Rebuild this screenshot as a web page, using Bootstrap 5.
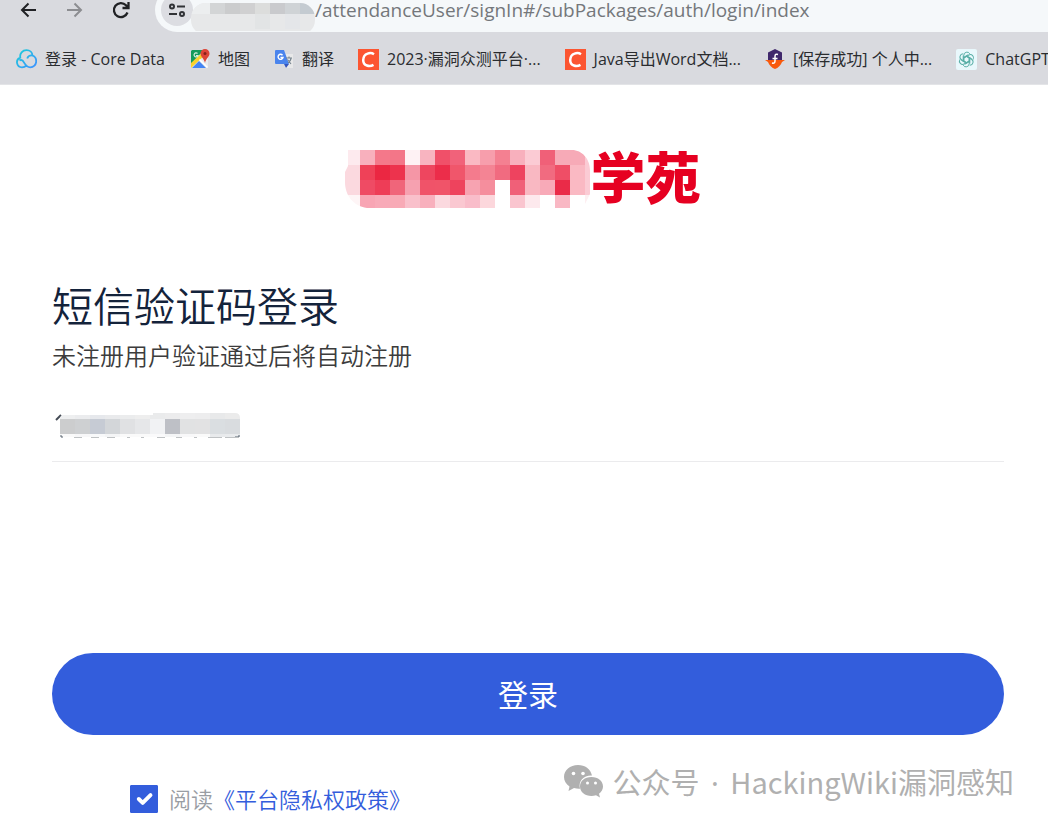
<!DOCTYPE html>
<html lang="zh-CN">
<head>
<meta charset="utf-8">
<meta name="viewport" content="width=device-width, initial-scale=1">
<title>短信验证码登录</title>
<link href="https://cdn.jsdelivr.net/npm/bootstrap@5.3.0/dist/css/bootstrap.min.css" rel="stylesheet">
<style>
body{font-family:"Noto Sans","Noto Sans CJK SC",sans-serif;color:#333;background:#fff;overflow-x:hidden}
.browser{background:#d9dadf;border-bottom:1px solid #e3e4e7}
.toolbar{height:32px;overflow:hidden}
.tool-btn{width:22px;height:22px;margin-bottom:10px}
.tool-group{gap:24px;padding-left:18px;padding-right:23px}
.address{height:44px;background:#f5f8fa;border-radius:22px 0 0 22px;padding-left:6px}
.site-info{width:32px;height:32px;background:#dcdde2}
.address-mask{margin-left:-2px;margin-bottom:-14px;z-index:1}
.address-input{font-family:"Open Sans","Noto Sans CJK SC",sans-serif;font-size:19px;line-height:28px;color:#74777b;outline:0}
.bookmarks{gap:24px;padding:2px 0 0 16px;height:52px;font-family:"Open Sans","Noto Sans CJK SC",sans-serif;font-size:16px;overflow:hidden}
.bookmarks a{color:#2a2c2f;gap:8px}
.signin{padding:65px 44px 0 52px}
.logo-row{padding-right:10px}
.wordmark{color:#e60021;font-size:55px;line-height:54px;font-weight:900}
.signin-title{margin-top:73px;font-size:41px;line-height:50px;color:#14233b;font-weight:350}
.signin-sub{margin-top:9px;font-size:24px;line-height:32px;font-weight:350;color:#3c3c3c}
.phone-wrap{margin:18px 0 191px}
.phone-mask{left:3px;top:23px}
.phone-field{height:72px;border-bottom:1px solid #ebebed!important}
.signin-btn{height:82px;background:#335ddc;color:#fff;font-size:30px}
.signin-btn:hover{background:#2c52c6;color:#fff}
.agree{gap:11px;margin-top:22px;font-size:22px;line-height:32px;color:#999da3;font-weight:350}
.agree a{color:#335ddc}
.agree .form-check-input{width:28px;height:28px;border-radius:1px}
.agree .form-check-input:checked{background-color:#335ddc;border-color:#335ddc}
.foot-row{padding:26px 34px 0 130px}
.account{font-family:"Noto Sans CJK SC",sans-serif;font-size:29px;line-height:40px;color:#b0b0b0;gap:8px}
.account-dot{font-family:"Noto Sans",sans-serif;padding:0 4px}
</style>
</head>
<body>
<header class="browser">
  <div class="toolbar d-flex align-items-end">
    <div class="tool-group d-flex flex-shrink-0">
      <button class="tool-btn btn p-0 border-0 d-flex" aria-label="后退"><svg width="22" height="22" viewBox="0 0 22 22" fill="none" stroke="#202124" stroke-width="2"><path d="M18 10H4M10.500 3.500 4 10l6.500 6.500"/></svg></button>
      <button class="tool-btn btn p-0 border-0 d-flex" aria-label="前进"><svg width="22" height="22" viewBox="0 0 22 22" fill="none" stroke="#8c8d91" stroke-width="2"><path d="M3 10h14M10.500 3.500 17 10l-6.500 6.500"/></svg></button>
      <button class="tool-btn btn p-0 border-0 d-flex" aria-label="刷新"><svg width="22" height="22" viewBox="0 0 22 22" fill="none" stroke="#202124" stroke-width="2.300"><path d="M17.500 12.500A7 7 0 1 1 16 5.200L18 7.500M18.500 2v6h-6"/></svg></button>
    </div>
    <div class="address d-flex flex-grow-1 align-items-center">
      <button class="site-info btn rounded-circle p-0 border-0 flex-shrink-0 d-flex align-items-center justify-content-center" aria-label="网站信息"><svg width="18" height="14" viewBox="0 0 18 14" fill="none" stroke="#303236" stroke-width="2"><circle cx="4" cy="3.500" r="2"/><path d="M9 3.500h8M1 11h8"/><circle cx="14" cy="11" r="2"/></svg></button>
      <svg class="address-mask flex-shrink-0 position-relative" width="124" height="28" viewBox="0 0 124 28"><defs><clipPath id="cm"><rect width="124" height="32" rx="15"/></clipPath></defs><g clip-path="url(#cm)"><path fill="#e7e8e9" d="M0 0h124v32H0z"/><path fill="#eceeef" d="M0 0h19v11H0z"/><path fill="#d3d5d6" d="M19 0h15v11H19z"/><path fill="#cbcccd" d="M34 0h15v11H34z"/><path fill="#d0d0d1" d="M49 0h15v11H49z"/><path fill="#dcdddc" d="M64 0h15v11H64z"/><path fill="#c9cacd" d="M79 0h15v11H79z"/><path fill="#cfd3d6" d="M94 0h15v11H94z"/><path fill="#c4cbd1" d="M109 0h15v11h-15z"/><path fill="#e2e4e5" d="M64 11h15v15H64z"/><path fill="#e4e6e9" d="M94 11h15v15H94z"/></g></svg>
      <input class="address-input flex-grow-1 border-0 bg-transparent p-0" aria-label="网址" value="/attendanceUser/signIn#/subPackages/auth/login/index">
    </div>
  </div>
  <nav class="bookmarks d-flex align-items-center text-nowrap" aria-label="书签">
    <a href="#" class="d-flex align-items-center text-decoration-none"><svg width="21" height="20" viewBox="0 0 21 20" fill="none" stroke-width="1.800"><defs><linearGradient id="cg" x2="1" y2="1"><stop stop-color="#19ced8"/><stop offset="1" stop-color="#3f92ff"/></linearGradient></defs><path stroke="url(#cg)" d="M10.500 16.500C9 18 7.500 18.300 6 18.300A5 5 0 0 1 4.300 8.600C3.500 4.500 6.500 1.200 10.500 1.200c3.500 0 5.800 2.300 6 5.300 2.200.8 3.700 3 3.700 5.700 0 3.600-2.700 6.100-6 6.100-4 0-5-3-6.500-5.300C6.500 11 5 10.500 3.500 11.500M16.500 6.500c-2.500-.4-4.500.8-5.300 3"/></svg>登录 - Core Data</a>
    <a href="#" class="d-flex align-items-center text-decoration-none"><svg width="21" height="20" viewBox="0 0 21 20"><rect x="2" y="1" width="17" height="18" rx="1.500" fill="#e9eaed"/><path fill="#149a5c" d="M3 1h12L2 15V2z"/><path fill="#f8d12d" d="m2 19 0-5L14 3l2 3z"/><path fill="#4384f3" d="m3 19 7-7 7 7z"/><path fill="#fff" d="m10 11 1-1 8 8-1 1z"/><path fill="#db4437" d="M16 0a4.500 4.500 0 0 1 4.500 4.500C20.500 8 17 9 16 14c-1-5-4.500-6-4.500-9.500A4.500 4.500 0 0 1 16 0z"/><circle cx="16" cy="4.500" r="1.500" fill="#862019"/><path fill="none" stroke="#d5efdf" stroke-width="1.200" d="M8.500 4.500a2 2 0 1 0 .5 2H7"/></svg>地图</a>
    <a href="#" class="d-flex align-items-center text-decoration-none"><svg width="20" height="20" viewBox="0 0 20 20"><path fill="#e8e8e9" d="M8 5h11v14H11z"/><path fill="#4a84ed" d="M2 1h8l5 14H2a1 1 0 0 1-1-1V2a1 1 0 0 1 1-1z"/><path fill="#3556bd" d="M10 15h5l-3 4z"/><path fill="none" stroke="#fff" stroke-width="1.400" d="M8.500 6.200A2.500 2.500 0 1 0 9 8.500H6.500"/><path fill="none" stroke="#76838e" stroke-width="1.100" d="M12 9h6M15 7.500V9m2 0c0 2-2 4-3 4.500M13.500 10.500 17 15"/></svg>翻译</a>
    <a href="#" class="d-flex align-items-center text-decoration-none"><svg width="21" height="21" viewBox="0 0 21 21"><path fill="#fc5531" d="M0 0h21v21H0z"/><path fill="none" stroke="#fff" stroke-width="2.500" d="M16 5.200C13 3.300 5.500 3.500 5.200 11c-.1 6 6.500 7 10.300 4.800"/></svg>2023·漏洞众测平台·...</a>
    <a href="#" class="d-flex align-items-center text-decoration-none"><svg width="21" height="21" viewBox="0 0 21 21"><path fill="#fc5531" d="M0 0h21v21H0z"/><path fill="none" stroke="#fff" stroke-width="2.500" d="M16 5.200C13 3.300 5.500 3.500 5.200 11c-.1 6 6.500 7 10.300 4.800"/></svg>Java导出Word文档...</a>
    <a href="#" class="d-flex align-items-center text-decoration-none"><svg width="20" height="20" viewBox="0 0 20 20"><path fill="#40286c" d="M3 3.500 10 0l7 3.500V11H3z"/><path fill="#f8590d" d="M0 11h20l-3 2c-1 3-4 6-7 7-3-1-6-4-7-7z"/><path fill="none" stroke="#fff" stroke-width="1.500" d="M13 5.500c-2-.7-3 0-3 2V12c0 2-1 2.500-3 2M7.500 9.500h5"/></svg>[保存成功] 个人中...</a>
    <a href="#" class="d-flex align-items-center text-decoration-none"><svg width="21" height="21" viewBox="0 0 21 21"><rect width="21" height="21" rx="2" fill="#e9f8fc"/><g fill="none" stroke="#58aea6" stroke-width="1"><path id="petal" d="M7.800 12.200V6.300a3.200 3.200 0 0 1 6-1.500M7.800 8.900l3.300-1.900 4.600 2.700"/><use href="#petal" transform="rotate(60 10.500 10.500)"/><use href="#petal" transform="rotate(120 10.500 10.500)"/><use href="#petal" transform="rotate(180 10.500 10.500)"/><use href="#petal" transform="rotate(240 10.500 10.500)"/><use href="#petal" transform="rotate(300 10.500 10.500)"/></g></svg>ChatGPT</a>
  </nav>
</header>
<main>
  <form class="signin" onsubmit="return false">
    <div class="logo-row d-flex justify-content-center align-items-start">
      <svg id="logoMosaic" class="flex-shrink-0" width="245" height="58" viewBox="0 0 245 58" aria-hidden="true"><defs><clipPath id="lm"><path d="M3 0h224c10 0 18 9 18 20v24l-5 10v4H22C8 56 0 45 0 32V22l3-6z"/></clipPath></defs><g clip-path="url(#lm)"></g></svg>
      <span class="wordmark">学苑</span>
    </div>
    <h1 class="signin-title mb-0">短信验证码登录</h1>
    <p class="signin-sub mb-0">未注册用户验证通过后将自动注册</p>
    <div class="phone-wrap position-relative">
      <input type="tel" id="phone" class="phone-field w-100 border-0 bg-transparent p-0" aria-label="手机号">
      <svg id="phoneMosaic" class="phone-mask position-absolute" width="190" height="28" viewBox="0 0 190 28" aria-hidden="true"><defs><clipPath id="pm"><path d="M8 2h90V0h82q5 0 5 5v19H5V5q0-2 3-3z"/></clipPath></defs><path d="M1 7 6 2" stroke="#444b55" stroke-width="2"/><g clip-path="url(#pm)"></g><path d="M6 22v2h2M184 22v2h-4" fill="none" stroke="#56636f"/><path d="M19 24.500h8m9 0h8m8 0h8m12 0h3m11 0h3m13 0h8m11 0h6m12 0h3m11 0h14m3 0h14" stroke="#bfc2c4"/></svg>
    </div>
    <button class="signin-btn btn border-0 rounded-pill w-100" type="submit">登录</button>
  </form>
  <div class="foot-row d-flex justify-content-between align-items-start">
    <div class="agree d-flex align-items-center text-nowrap">
      <input class="form-check-input m-0 flex-shrink-0 shadow-none" type="checkbox" id="agree" checked>
      <div><label for="agree">阅读</label><a href="#" class="text-decoration-none">《平台隐私权政策》</a></div>
    </div>
    <div class="account d-flex align-items-center text-nowrap">
      <svg width="40" height="34" viewBox="0 0 40 34"><path fill="#b0b0b0" d="M14 0C6 0 0 5 0 12c0 4 2 7 5.500 9.500L4.500 26l5.500-3c2 .6 4 .8 6 .7C14 16 20 10 28 10.500 26.500 4 21 0 14 0z"/><path fill="#b0b0b0" d="M27.500 12C20.500 12 16 16 16 21.500S21 31 27.500 31c1.500 0 3-.2 4.500-.7l4 2.200-1-3.700c2.500-1.800 4-4.500 4-7.300C39 16 34 12 27.500 12z"/><g fill="#fff"><circle cx="9.500" cy="8.500" r="1.800"/><circle cx="19" cy="8.500" r="1.800"/><circle cx="23.500" cy="18" r="1.500"/><circle cx="31.500" cy="18" r="1.500"/></g></svg>
      <span>公众号<span class="account-dot"> · </span>HackingWiki漏洞感知</span>
    </div>
  </div>
</main>
<script src="https://cdn.jsdelivr.net/npm/bootstrap@5.3.0/dist/js/bootstrap.bundle.min.js"></script>
<script>
// Fills a group with 15px privacy tiles, one string of hex colours per row.
function tiles(id, rows, x0, ys) {
  const g = document.querySelector('#' + id + ' > g');
  rows.forEach((row, r) => row.split(' ').forEach((c, i) => {
    const t = document.createElementNS('http://www.w3.org/2000/svg', 'rect');
    t.setAttribute('x', x0 + i * 15); t.setAttribute('y', ys[r]);
    t.setAttribute('width', 15); t.setAttribute('height', ys[r + 1] - ys[r]);
    t.setAttribute('fill', '#' + c); t.setAttribute('shape-rendering', 'crispEdges');
    g.appendChild(t);
  }));
}
tiles('logoMosaic', [
 'fdeaee f8b0bd f4788a f37688 fef2f4 f8b4c0 f05069 f1627a fab9c3 f79eac f48091 f8b0bd fbcbd4 f06078 f7aab7 f7aab7 fbcbd4',
 'fbd9df ef4158 eb2742 ed334d f596a6 ee465f ec2d4a f0566b f47b8d f48494 f16b80 ee435f f9b8c2 f16b80 ef4e66 fab9c3 fbcbd4',
 'fbd9df ef4b64 ee3d57 f0657a f6a1b0 f05369 f05469 ee435d f7a3b1 f58e9d ffffff f06078 f9b8c2 f8aab8 ea2b48 fab9c3 fbcbd4',
 'fef5f6 f8a5b4 f8aab8 f8aab6 f9c0cb f8b0bd fbd9df fac8d1 f9bdca fcd7dc ffffff fac5cf fde9ed ffffff f9b8c4 ffffff fdeff1'
], 0, [0, 15, 30, 45, 58]);
tiles('phoneMosaic', [
 'eeeff0 ebecee e6e8ec e9eaec ebeced eeeeee eaebec ececed eeeeef ededee e8e9ea ebebeb',
 'cccdce ced0d2 c6cbd4 d3d6d9 e0e1e3 e6e7e9 f1f2f4 bec0c6 e1e2e3 e2e2e3 dadee1 d9dcdf',
 'fafafa f7f7f8 f8f9fa f4f5f6 fafafa fafafa fafafb f4f5f6 f8f8f9 fafafa e8eaec e9ebed'
], 5, [0, 6, 21, 24]);
</script>
</body>
</html>
